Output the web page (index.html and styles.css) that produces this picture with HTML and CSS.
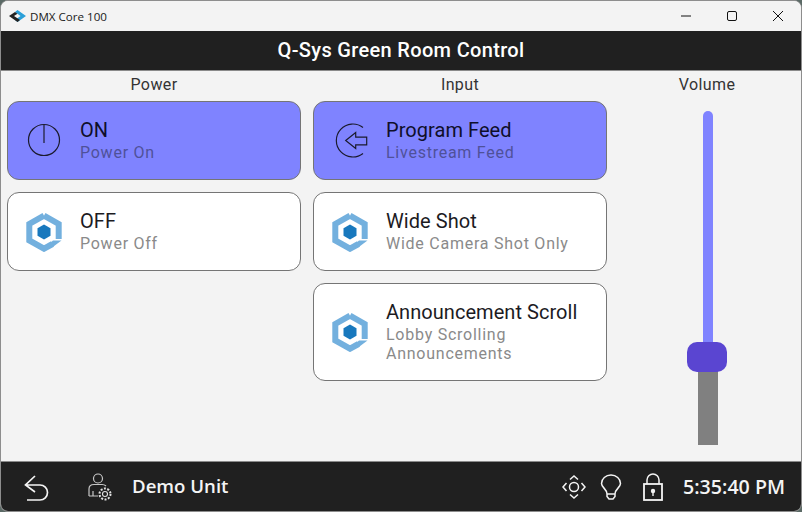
FILE: index.html
```html
<!DOCTYPE html>
<html lang="en">
<head>
<meta charset="utf-8">
<title>DMX Core 100</title>
<link rel="stylesheet" href="styles.css">
</head>
<body>
<svg class="defs" width="0" height="0" aria-hidden="true">
  <symbol id="hex" viewBox="0 0 36 40">
    <path d="M18 3.700 32.700 12V27M26.500 32 18 36.700 3.300 28.400V12L18 3.700" fill="none" stroke="#73b0de" stroke-width="6" stroke-linejoin="miter"/>
    <path d="M27 28.500 35.500 28.500 27.500 34.500 20 34.500Z" fill="#73b0de"/>
    <path d="M18 12.500 24.500 16.200V23.800L18 27.500 11.500 23.800V16.200Z" fill="#1878bd"/>
  </symbol>
</svg>
<div class="window">
  <div class="titlebar">
    <div class="app-name">
      <svg class="app-icon" width="17" height="12" viewBox="0 0 17 12">
        <path d="M8.500 0 17 6 8.500 12 6 10 11.500 6 6 2Z" fill="#2a9fd8"/>
        <path d="M6 2 0 6 8.500 12 11 10 5 6 8.500 3.800Z" fill="#222"/>
      </svg>
      <span>DMX Core 100</span>
    </div>
    <div class="controls">
      <svg width="12" height="12" viewBox="0 0 12 12"><path d="M1 6H11" stroke="#111" fill="none"/></svg>
      <svg width="12" height="12" viewBox="0 0 12 12"><rect x="1.500" y="1.500" width="9" height="9" rx="1.500" stroke="#111" fill="none"/></svg>
      <svg width="12" height="12" viewBox="0 0 12 12"><path d="M1 1 11 11M11 1 1 11" stroke="#111" fill="none"/></svg>
    </div>
  </div>
  <header class="header">Q-Sys Green Room Control</header>
  <main class="content">
    <section class="column">
      <h2 class="col-label">Power</h2>
      <div class="card active">
        <svg class="card-icon" width="36" height="40" viewBox="0 0 36 40"><circle cx="18" cy="19" r="15.500" fill="none" stroke="#1b1b2e" stroke-width="1.200"/><path d="M18 4V22" stroke="#1b1b2e" stroke-width="1.200"/></svg>
        <div class="card-text"><div class="card-title">ON</div><div class="card-sub">Power On</div></div>
      </div>
      <div class="card">
        <svg class="card-icon" width="36" height="40"><use href="#hex"/></svg>
        <div class="card-text"><div class="card-title">OFF</div><div class="card-sub">Power Off</div></div>
      </div>
    </section>
    <section class="column">
      <h2 class="col-label">Input</h2>
      <div class="card active">
        <svg class="card-icon" width="36" height="40" viewBox="0 0 36 40"><path d="M31 6.500A16.500 16.500 0 1 0 31 32.500" fill="none" stroke="#1b1b2e" stroke-width="1.200"/><path d="M13.700 19.500 23.700 11.500V16.200H34.700V23.800H23.700V27.500Z" fill="none" stroke="#1b1b2e" stroke-width="1.200"/></svg>
        <div class="card-text"><div class="card-title">Program Feed</div><div class="card-sub">Livestream Feed</div></div>
      </div>
      <div class="card">
        <svg class="card-icon" width="36" height="40"><use href="#hex"/></svg>
        <div class="card-text"><div class="card-title">Wide Shot</div><div class="card-sub">Wide Camera Shot Only</div></div>
      </div>
      <div class="card tall">
        <svg class="card-icon" width="36" height="40"><use href="#hex"/></svg>
        <div class="card-text"><div class="card-title">Announcement Scroll</div><div class="card-sub">Lobby Scrolling Announcements</div></div>
      </div>
    </section>
    <section class="volume">
      <h2 class="col-label">Volume</h2>
      <div class="slider">
        <div class="track-fill"></div>
        <div class="track-rest"></div>
        <div class="thumb"></div>
      </div>
    </section>
  </main>
  <footer class="footer">
    <svg class="back" width="28" height="28" viewBox="0 0 28 28"><path d="M13 3 3.500 12 13 19M3.500 12H18A7.500 7.500 0 0 1 18 27H5" fill="none" stroke="#f4f4f4" stroke-width="1.700"/></svg>
    <svg class="user" width="26" height="30" viewBox="0 0 26 30">
      <circle cx="10" cy="6.500" r="4.500" fill="none" stroke="#c8c8c8" stroke-width="1.200"/>
      <path d="M1 24V17C1 14 3 12.500 6 12.500H14C15.500 12.500 17 13 18 14M1 24H10M5 24V19" fill="none" stroke="#c8c8c8" stroke-width="1.200"/>
      <circle cx="17" cy="22" r="2.500" fill="none" stroke="#e0e0e0" stroke-width="1.100"/>
      <circle cx="17" cy="22" r="5.500" fill="none" stroke="#e0e0e0" stroke-width="2" stroke-dasharray="2 1.450"/>
    </svg>
    <span class="unit">Demo Unit</span>
    <div class="status">
      <svg width="24" height="24" viewBox="0 0 24 24"><circle cx="12" cy="12" r="4.500" fill="none" stroke="#f4f4f4" stroke-width="1.500"/><path d="M8 4.500 12 1 16 4.500M4.500 8 1 12 4.500 16M19.500 8 23 12 19.500 16M8 19.500 12 23 16 19.500" fill="none" stroke="#f4f4f4" stroke-width="1.500"/></svg>
      <svg width="22" height="26" viewBox="0 0 22 26"><path d="M7 20C7 15 1.500 13.500 1.500 9.500A9.500 8.500 0 0 1 20.500 9.500C20.500 13.500 15 15 15 20ZM7 20V22.500L9 25H13L15 22.500V20" fill="none" stroke="#f4f4f4" stroke-width="1.500"/></svg>
      <svg class="lock" width="20" height="28" viewBox="0 0 20 28"><rect x="1" y="11" width="18" height="16" fill="none" stroke="#f4f4f4" stroke-width="1.800"/><path d="M4 11V7A6 6 0 0 1 16 7V11" fill="none" stroke="#f4f4f4" stroke-width="1.500"/><circle cx="10" cy="18" r="2.200" fill="#f4f4f4"/><path d="M10 18V23" stroke="#f4f4f4" stroke-width="1.400"/></svg>
    </div>
    <span class="clock">5:35:40 PM</span>
  </footer>
</div>
</body>
</html>
```
FILE: styles.css
```css
* { box-sizing: border-box; }
html, body { margin: 0; height: 100%; background: #5b6a66; overflow: hidden; }
.defs { position: absolute; }
.window {
  width: 802px; height: 512px; display: flex; flex-direction: column;
  background: #f3f3f3; border-radius: 8px; overflow: hidden;
  border: 1px solid #8d8d8d;
  font-family: Roboto, sans-serif; color: #202020;
}
.titlebar { height: 30px; flex: none; display: flex; align-items: center; justify-content: space-between; background: #f3f3f3; }
.app-name { display: flex; align-items: center; gap: 4px; padding-left: 8px; font: 11.600px "Open Sans", sans-serif; color: #1a1a1a; }
.controls { display: flex; gap: 34px; padding-right: 17px; }
.controls svg { display: block; }
.header {
  height: 40px; flex: none; background: #202020; color: #fff; text-align: center;
  font-size: 20px; font-weight: 500; line-height: 39px; letter-spacing: 0.33px;
  border-bottom: 1px solid #8a8a8a;
}
.content { flex: 1; display: flex; gap: 12px; padding: 0 0 0 6px; min-height: 0; }
.column { width: 294px; flex: none; display: flex; flex-direction: column; gap: 12px; }
.col-label { margin: 4px 0 -5px; font-size: 16px; font-weight: 400; line-height: 19px; letter-spacing: 0.4px; text-align: center; color: #333; }
.card {
  min-height: 79px; display: flex; align-items: center; gap: 18px; padding: 0 18px;
  background: #fff; border: 1px solid #757575; border-radius: 12px;
}
.card.tall { min-height: 98px; }
.card.active { background: #7f83ff; }
.card-icon { flex: none; display: block; }
.card-text { padding-bottom: 2px; }
.card-title { font-size: 20px; line-height: 24px; letter-spacing: 0.05px; margin-bottom: 1px; color: #1c1b1f; }
.card-sub { font-size: 16px; line-height: 19px; letter-spacing: 0.75px; margin-bottom: -1px; color: #8a8a8a; }
.active .card-sub { color: #4f5199; }
.card.active .card-title { color: #0f0f2a; }
.volume { width: 176px; flex: none; display: flex; flex-direction: column; }
.slider { position: relative; width: 40px; height: 334px; align-self: center; display: flex; flex-direction: column; align-items: center; margin-top: 22px; padding-left: 2px; }
.track-fill { width: 10px; height: 240px; background: #7f83ff; border-radius: 5px 5px 0 0; }
.track-rest { width: 20px; flex: 1; background: #808080; }
.thumb { position: absolute; left: 0; top: 231px; width: 40px; height: 30px; background: #5a45d1; border-radius: 10px; }
.footer {
  height: 50px; flex: none; display: flex; align-items: center; background: #202020; color: #f4f4f4;
  border-top: 1px solid #8a8a8a; padding: 0 16px 0 21px;
}
.back { display: block; }
.user { display: block; margin-left: 38px; margin-top: 1px; }
.unit { margin-left: 18px; margin-bottom: 2px; font: 600 18.600px "Open Sans", sans-serif; }
.status { margin-left: auto; display: flex; align-items: center; gap: 14px; }
.status svg { display: block; }
.lock { margin-left: 7px; }
.clock { margin-left: 20px; font: 600 19.600px "Open Sans", sans-serif; }
```
